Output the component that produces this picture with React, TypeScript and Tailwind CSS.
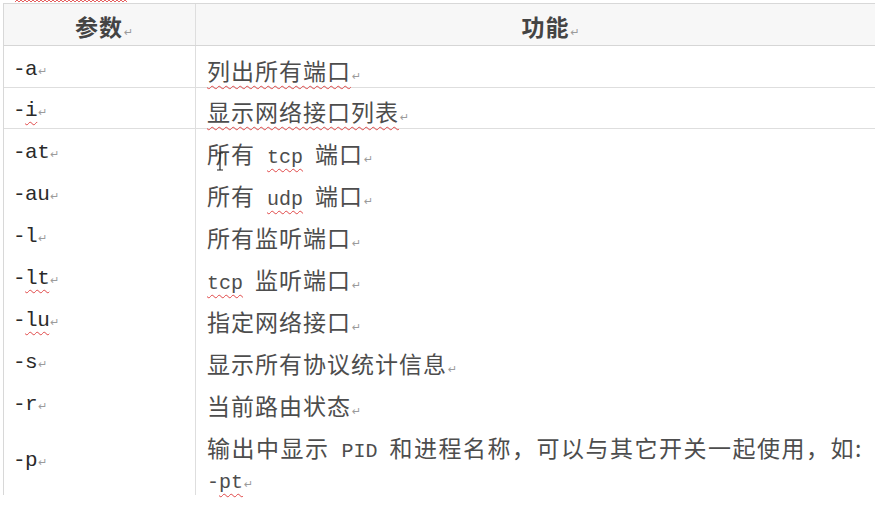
import React from 'react';

// Word-style table of netstat switches

const Mono = ({ children }: { children: React.ReactNode }) => (
  <span className="font-['Liberation_Mono',monospace] text-[20px] leading-none tracking-normal">{children}</span>
);

const Wavy = ({ children }: { children: React.ReactNode }) => (
  <span className="underline decoration-wavy decoration-[#e04848] decoration-1 underline-offset-[5px] [text-decoration-skip-ink:none]">
    {children}
  </span>
);

// paragraph mark
const Mark = () => (
  <span className="inline-block w-0 pl-[1px] font-['DejaVu_Sans',sans-serif] text-[11px] font-normal leading-none tracking-normal text-[#9b9b9b]">
    ↵
  </span>
);

type Row = { param: React.ReactNode; desc: React.ReactNode; line?: boolean; h: string };

const ROWS: Row[] = [
  { param: <>-a</>, desc: <Wavy>列出所有端口</Wavy>, line: true, h: 'h-[42px]' },
  { param: <>-<Wavy>i</Wavy></>, desc: <Wavy>显示网络接口列表</Wavy>, line: true, h: 'h-[41px]' },
  { param: <>-at</>, desc: <>所有<Mono> <Wavy>tcp</Wavy> </Mono>端口</>, h: 'h-[42px]' },
  { param: <>-au</>, desc: <>所有<Mono> <Wavy>udp</Wavy> </Mono>端口</>, h: 'h-[42px]' },
  { param: <>-l</>, desc: <>所有监听端口</>, h: 'h-[42px]' },
  { param: <>-<Wavy>lt</Wavy></>, desc: <><Mono><Wavy>tcp</Wavy> </Mono>监听端口</>, h: 'h-[42px]' },
  { param: <>-<Wavy>lu</Wavy></>, desc: <>指定网络接口</>, h: 'h-[42px]' },
  { param: <>-s</>, desc: <>显示所有协议统计信息</>, h: 'h-[42px]' },
  { param: <>-r</>, desc: <>当前路由状态</>, h: 'h-[42px]' },
];

function WaveLine({ width }: { width: number }) {
  let d = 'M0 3';
  for (let x = 0; x < width; x += 4) d += ` l2 -2 l2 2`;
  return (
    <svg width={width} height="4" className="absolute left-[15px] top-[-1px]">
      <path d={d} stroke="#e56060" strokeWidth="1" fill="none" />
    </svg>
  );
}

export default function App() {
  return (
    <div className="relative h-[508px] w-[875px] overflow-hidden bg-white font-['Noto_Sans_CJK_SC',sans-serif] text-[23px] leading-[30px] tracking-[1px] text-[#4d4d4d]">
      <WaveLine width={112} />

      <div className="ml-[3px] mt-[3px] w-[893px] border-l border-t border-[#d8d8d8]">
        {/* header */}
        <div className="grid h-[42px] grid-cols-[192px_700px] border-b border-[#d6d6d6] bg-[#f7f7f7] font-bold text-[#444]">
          <div className="flex items-center justify-center border-r border-[#dedede] pt-[2px]">
            <span>参数<Mark /></span>
          </div>
          <div className="flex items-center justify-center pt-[2px]">
            <span>功能<Mark /></span>
          </div>
        </div>

        {ROWS.map((r, i) => (
          <div
            key={i}
            className={`grid grid-cols-[192px_700px] ${r.h} ${r.line ? 'border-b border-[#dedede]' : ''}`}
          >
            <div className="flex items-center border-r border-[#dedede] pl-[9px] pt-[6px] text-[#2a2a2a]">
              <span className="font-['Liberation_Mono',monospace] text-[21px] tracking-[-0.5px]">
                {r.param}
                <Mark />
              </span>
            </div>
            <div className="flex items-center whitespace-nowrap pl-[11px] pt-[6px]">
              <span>
                {r.desc}
                <Mark />
              </span>
            </div>
          </div>
        ))}

        {/* -p row, two lines */}
        <div className="grid h-[72px] grid-cols-[192px_700px]">
          <div className="flex items-center border-r border-[#dedede] pl-[9px] pt-[4px] text-[#2a2a2a]">
            <span className="font-['Liberation_Mono',monospace] text-[21px] tracking-[-0.5px]">
              -p
              <Mark />
            </span>
          </div>
          <div className="flex flex-col pl-[11px] pt-[9px] leading-[31px]">
            <div className="whitespace-nowrap tracking-[1.5px]">
              输出中显示<Mono> PID </Mono>和进程名称，可以与其它开关一起使用，如:
            </div>
            <div className="tracking-normal">
              <Mono>
                -<Wavy>pt</Wavy>
              </Mono>
              <Mark />
            </div>
          </div>
        </div>
      </div>

      {/* text cursor */}
      <svg width="8" height="19" className="absolute left-[216px] top-[152px]">
        <path d="M1 1h6M4 1v17M1 18h6" stroke="#222" strokeWidth="1.2" fill="none" />
      </svg>
    </div>
  );
}
